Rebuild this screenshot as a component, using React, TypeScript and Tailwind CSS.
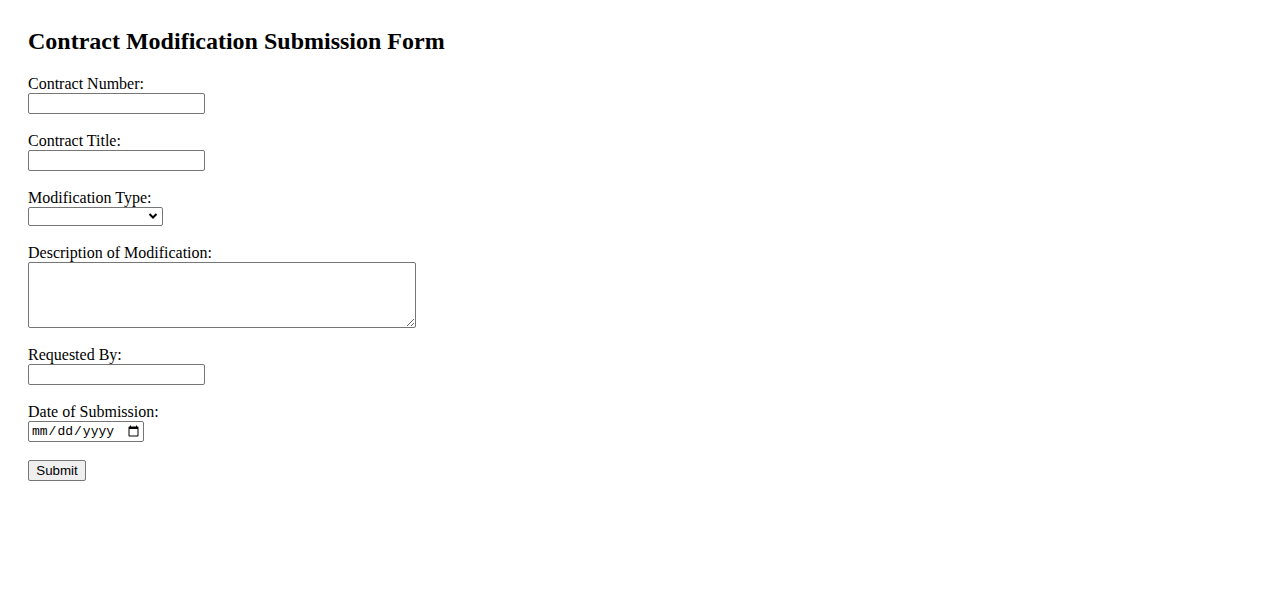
export default function App() {
  return (
    <div className="min-h-screen bg-white text-black font-['Liberation_Serif',_'Times_New_Roman',_serif]">
      <div className="pt-[28px] pl-[28px]">
        <h2 className="text-[24px] leading-[27px] font-bold mb-[20px]">
          Contract Modification Submission Form
        </h2>

        <form className="flex flex-col items-start" onSubmit={(e) => e.preventDefault()}>
          {/* Contract Number */}
          <label htmlFor="contractNumber" className="text-[16px] leading-[18px]">
            Contract Number:
          </label>
          <input
            id="contractNumber"
            type="text"
            className="w-[177px] h-[21px] border border-[#767676] rounded-[2px] px-[2px] text-[13px] font-['Liberation_Sans',_Arial,_sans-serif] bg-white"
          />

          {/* Contract Title */}
          <label htmlFor="contractTitle" className="text-[16px] leading-[18px] mt-[18px]">
            Contract Title:
          </label>
          <input
            id="contractTitle"
            type="text"
            className="w-[177px] h-[21px] border border-[#767676] rounded-[2px] px-[2px] text-[13px] font-['Liberation_Sans',_Arial,_sans-serif] bg-white"
          />

          {/* Modification Type */}
          <label htmlFor="modType" className="text-[16px] leading-[18px] mt-[18px]">
            Modification Type:
          </label>
          <div className="relative">
            <select
              id="modType"
              className="appearance-none w-[135px] h-[19px] border border-[#767676] rounded-[2px] bg-white text-[13px] font-['Liberation_Sans',_Arial,_sans-serif] block"
            >
              <option value=""></option>
              <option value="scope">Scope Change</option>
              <option value="budget">Budget Change</option>
              <option value="schedule">Schedule Change</option>
            </select>
            <svg
              className="absolute right-[5px] top-[5px] pointer-events-none"
              width="10"
              height="8"
              viewBox="0 0 10 8"
            >
              <path d="M1.5 2 L5 5.5 L8.5 2" fill="none" stroke="#000" strokeWidth="2" />
            </svg>
          </div>

          {/* Description */}
          <label htmlFor="description" className="text-[16px] leading-[18px] mt-[18px]">
            Description of Modification:
          </label>
          <textarea
            id="description"
            className="w-[388px] h-[66px] border border-[#767676] rounded-[2px] bg-white p-[2px] text-[13px] font-['Liberation_Mono',_monospace] block"
          />

          {/* Requested By */}
          <label htmlFor="requestedBy" className="text-[16px] leading-[18px] mt-[18px]">
            Requested By:
          </label>
          <input
            id="requestedBy"
            type="text"
            className="w-[177px] h-[21px] border border-[#767676] rounded-[2px] px-[2px] text-[13px] font-['Liberation_Sans',_Arial,_sans-serif] bg-white"
          />

          {/* Date */}
          <label htmlFor="submissionDate" className="text-[16px] leading-[18px] mt-[18px]">
            Date of Submission:
          </label>
          <input
            id="submissionDate"
            type="date"
            className="w-[116px] h-[21px] border border-[#767676] rounded-[2px] pl-[2px] pr-[1px] text-[13px] leading-[17px] font-['Liberation_Mono',_monospace] bg-white"
          />

          <button
            type="submit"
            className="mt-[18px] w-[58px] h-[21px] border border-[#767676] rounded-[2px] bg-[#efefef] text-[13.33px] leading-[15px] font-['Liberation_Sans',_Arial,_sans-serif]"
          >
            Submit
          </button>
        </form>
      </div>
    </div>
  );
}
